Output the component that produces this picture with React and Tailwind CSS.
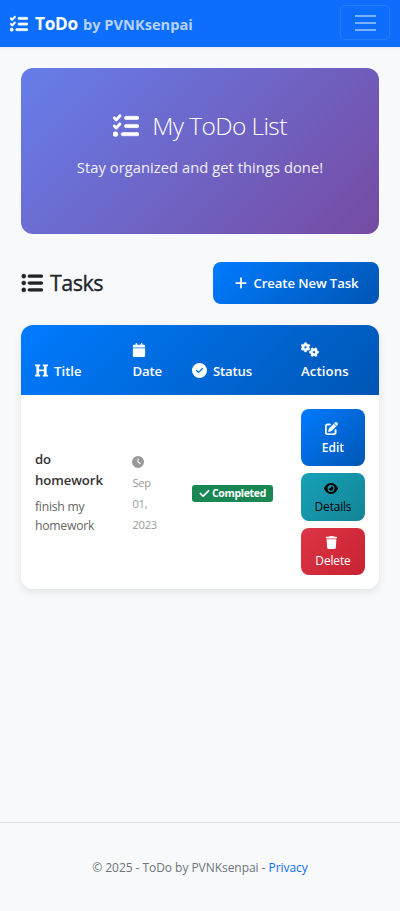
import {
  FaListCheck,
  FaListUl,
  FaPlus,
  FaCalendar,
  FaCircleCheck,
  FaGears,
  FaClock,
  FaPenToSquare,
  FaEye,
  FaTrash,
  FaCheck,
} from "react-icons/fa6";

function HeadingIcon() {
  return (
    <svg viewBox="0 0 13 13" className="mr-[6px] mb-[2px] size-[13px] fill-current">
      <path d="M0 .5h5.2v1.7H4.1v3.3h4.8V2.2H7.8V.5H13v1.7h-1.4v8.6H13v1.7H7.8v-1.7h1.1V7.2H4.1v3.6h1.1v1.7H0v-1.7h1.4V2.2H0z" />
    </svg>
  );
}

function Navbar() {
  return (
    <nav className="flex h-[47px] items-center justify-between bg-[#0d6efd] pr-[10px] pl-[10px] shadow-[0_1px_3px_rgba(0,0,0,0.08)]">
      <div className="flex items-center whitespace-nowrap font-bold text-white">
        <FaListCheck className="mr-[7px] size-[18px] stroke-current stroke-[14px]" />
        <span className="text-[17.2px] leading-6 tracking-[-0.25px]">ToDo</span>
        <span className="ml-[5px] text-[14.6px] leading-6 tracking-[0.02px] text-[#b6d3fe]">by PVNKsenpai</span>
      </div>
      <button className="mt-[-2px] flex h-[35px] w-[50px] flex-col items-center justify-center gap-[5px] rounded-[5px] border border-[#257dfd]">
        <span className="h-[2px] w-[21px] bg-[#7bb1fe]" />
        <span className="h-[2px] w-[21px] bg-[#7bb1fe]" />
        <span className="h-[2px] w-[21px] bg-[#7bb1fe]" />
      </button>
    </nav>
  );
}

function Hero() {
  return (
    <header className="flex h-[166px] flex-col items-center rounded-[12px] bg-[linear-gradient(135deg,#667eea_0%,#764ba2_100%)] pt-[42px] whitespace-nowrap text-white">
      <h1 className="flex items-center text-[24.5px] leading-[32px] font-light tracking-[-0.6px]">
        <FaListCheck className="mr-[13px] size-[26px] stroke-current stroke-[12px]" />
        <span>My ToDo List</span>
      </h1>
      <p className="mt-[13px] text-[14.7px] leading-[24px] tracking-[0.06px] text-white/90">
        Stay organized and get things done!
      </p>
    </header>
  );
}

function TaskTable() {
  return (
    <section className="mt-[21px] overflow-hidden rounded-[12px] bg-white shadow-[0_3px_8px_rgba(0,0,0,0.09)]">
      <div className="grid h-[70px] grid-cols-[97.5px_59.5px_109px_92px] items-end bg-[linear-gradient(135deg,#007bff_0%,#0056b3_100%)] pb-[13px] text-[13.2px] leading-[21px] font-semibold tracking-[-0.2px] whitespace-nowrap text-white">
        <div className="flex items-center pl-[14px] tracking-[0px]">
          <HeadingIcon />
          Title
        </div>
        <div className="pl-[14px]">
          <FaCalendar className="mb-[4px] ml-[-1px] size-[14px]" />
          Date
        </div>
        <div className="flex items-center pl-[14px]">
          <FaCircleCheck className="mr-[6px] mb-[2px] size-[15px]" />
          Status
        </div>
        <div className="pl-[14px] tracking-[0.1px]">
          <FaGears className="mb-[4px] h-[15px] w-[18px] stroke-current stroke-[14px]" />
          Actions
        </div>
      </div>
      <div className="grid h-[194px] grid-cols-[97.5px_59.5px_109px_92px] items-center">
        <div className="pl-[14px]">
          <div className="text-[13.2px] leading-[21px] font-semibold tracking-[-0.1px] text-[#333]">
            do
            <br />
            homework
          </div>
          <div className="mt-[6px] text-[12.2px] leading-[19px] tracking-[-0.25px] text-[#666]">
            finish my
            <br />
            homework
          </div>
        </div>
        <div className="pt-[2px] pl-[14px] text-[11.2px] leading-[21px] tracking-[-0.3px] text-[#999]">
          <div className="flex h-[21px] items-center">
            <FaClock className="ml-[-1px] size-[12px]" />
          </div>
          Sep
          <br />
          01,
          <br />
          2023
        </div>
        <div className="pt-[2px] pl-[14px]">
          <span className="flex h-[17px] w-[81px] items-center justify-center rounded-[3px] bg-[#198754] text-[10.5px] leading-[17px] font-bold tracking-[-0.33px] whitespace-nowrap text-white">
            <FaCheck className="mr-[2px] size-[11px] stroke-current stroke-[16px]" />
            Completed
          </span>
        </div>
        <div className="flex flex-col gap-[7px] pl-[14px] text-[12px] leading-[18px]">
          <button className="flex h-[57px] w-[64px] flex-col items-center rounded-[8px] bg-[linear-gradient(135deg,#007bff_0%,#0056b3_100%)] pt-[13px] font-semibold text-white">
            <FaPenToSquare className="mr-[4px] mb-[4px] size-[13px] stroke-current stroke-[12px]" />
            Edit
          </button>
          <button className="flex h-[48px] w-[64px] flex-col items-center rounded-[8px] bg-[linear-gradient(135deg,#17a2b8_0%,#138496_100%)] pt-[9px] tracking-[-0.2px] text-black">
            <FaEye className="mr-[4px] mb-[3px] h-[13px] w-[14px]" />
            Details
          </button>
          <button className="flex h-[47px] w-[64px] flex-col items-center rounded-[8px] bg-[linear-gradient(135deg,#dc3545_0%,#c82333_100%)] pt-[8px] tracking-[-0.15px] text-white">
            <FaTrash className="mr-[4px] mb-[3px] size-[13px]" />
            Delete
          </button>
        </div>
      </div>
    </section>
  );
}

export default function App() {
  return (
    <div className="flex h-[911px] w-[400px] flex-col overflow-hidden bg-[#f8f9fa] font-['Open_Sans','Noto_Sans',sans-serif] text-[#212529]">
      <Navbar />
      <main className="flex-1 px-[21px] pt-[21px]">
        <Hero />
        <div className="mt-[28px] flex h-[42px] items-center justify-between whitespace-nowrap">
          <h2 className="flex items-center text-[21.5px] leading-[28px] font-medium tracking-[-0.55px] [-webkit-text-stroke:0.35px_#212529]">
            <FaListUl className="mr-[7px] size-[22px] stroke-current stroke-[12px]" />
            Tasks
          </h2>
          <button className="flex h-[42px] w-[166px] items-center justify-center rounded-[8px] bg-[linear-gradient(135deg,#007bff_0%,#0056b3_100%)] text-[13.2px] font-semibold tracking-[-0.12px] text-white">
            <FaPlus className="mr-[6px] size-[14px]" />
            <span className="pt-[1px]">Create New Task</span>
          </button>
        </div>
        <TaskTable />
      </main>
      <footer className="flex h-[89px] items-center justify-center border-t border-[#dee2e6] pt-[2px] text-[12px] tracking-[-0.05px] whitespace-pre text-[#6c757d]">
        <span>© 2025 - ToDo by PVNKsenpai - </span>
        <a className="text-[#0d6efd]">Privacy</a>
      </footer>
    </div>
  );
}
